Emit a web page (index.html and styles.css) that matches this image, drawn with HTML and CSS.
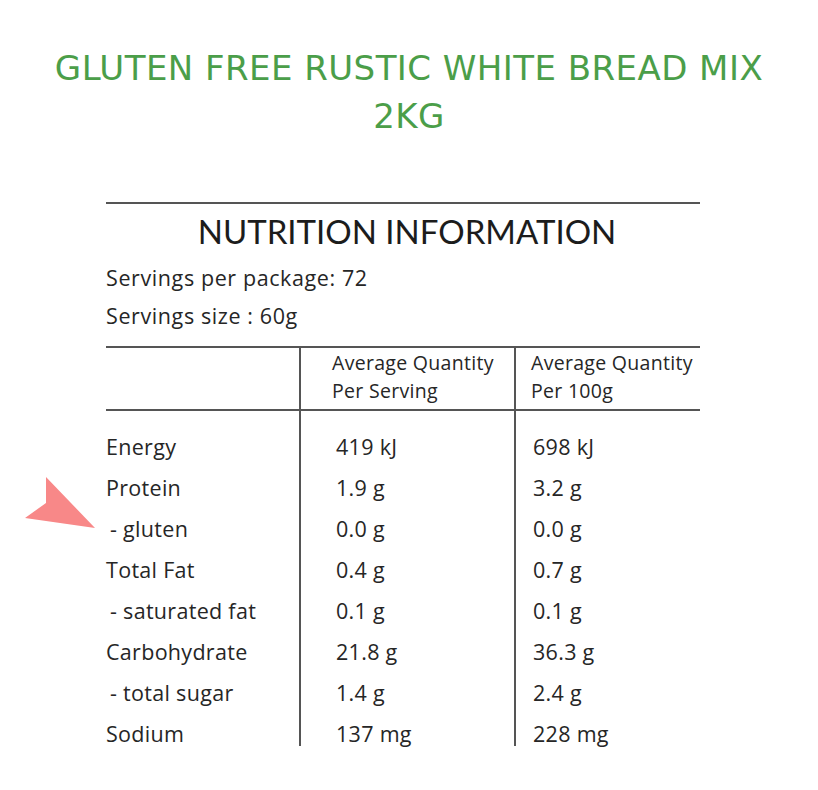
FILE: index.html
```html
<!DOCTYPE html>
<html>
<head>
<meta charset="utf-8">
<link rel="stylesheet" href="styles.css">
</head>
<body>
<div class="page">
  <h1 class="title">GLUTEN FREE RUSTIC WHITE BREAD MIX<br>2KG</h1>
  <div class="panel">
    <h2 class="panel-title">NUTRITION INFORMATION</h2>
    <p class="meta">Servings per package: 72</p>
    <p class="meta">Servings size : 60g</p>
    <div class="table">
      <div class="row head">
        <div class="c1"></div>
        <div class="c2">Average Quantity<br>Per Serving</div>
        <div class="c3">Average Quantity<br>Per 100g</div>
      </div>
      <div class="body">
        <div class="row first"><div class="c1">Energy</div><div class="c2">419 kJ</div><div class="c3">698 kJ</div></div>
        <div class="row"><div class="c1">Protein</div><div class="c2">1.9 g</div><div class="c3">3.2 g</div></div>
        <div class="row"><div class="c1 sub">- gluten</div><div class="c2">0.0 g</div><div class="c3">0.0 g</div></div>
        <div class="row"><div class="c1">Total Fat</div><div class="c2">0.4 g</div><div class="c3">0.7 g</div></div>
        <div class="row"><div class="c1 sub">- saturated fat</div><div class="c2">0.1 g</div><div class="c3">0.1 g</div></div>
        <div class="row"><div class="c1">Carbohydrate</div><div class="c2">21.8 g</div><div class="c3">36.3 g</div></div>
        <div class="row"><div class="c1 sub">- total sugar</div><div class="c2">1.4 g</div><div class="c3">2.4 g</div></div>
        <div class="row last"><div class="c1">Sodium</div><div class="c2">137 mg</div><div class="c3">228 mg</div></div>
      </div>
    </div>
  </div>
  <svg class="pointer" width="80" height="60" viewBox="20 472 80 60"><polygon points="46,477 95,528 25,518 46,503" fill="#f88888"/></svg>
</div>
</body>
</html>
```
FILE: styles.css
```css
html, body { margin: 0; padding: 0; background: #fff; }
.page {
  position: relative;
  width: 818px;
  height: 790px;
  font-family: "Open Sans", Lato, sans-serif;
  color: #262626;
}
.title {
  margin: 0;
  padding-top: 44px;
  text-align: center;
  font-family: "DejaVu Sans", sans-serif;
  font-weight: 400;
  font-size: 34px;
  line-height: 48px;
  color: #4b9e49;
  letter-spacing: 0.45px;
}
.panel {
  margin: 62px 118px 0 106px;
  border-top: 2px solid #555;
}
.panel-title {
  margin: 0;
  padding-left: 8px;
  text-align: center;
  font-family: Lato, sans-serif;
  font-weight: 400;
  font-size: 33px;
  line-height: 54px;
  color: #1c1c1c;
}
.meta {
  margin: 0;
  font-size: 21.5px;
  line-height: 38px;
  letter-spacing: 0.6px;
}
.meta:first-of-type { padding-top: 1px; }
.table {
  margin-top: 11px;
  border-top: 2px solid #555;
}
.row {
  display: grid;
  grid-template-columns: 193px 215px 1fr;
}
.c2 { border-left: 2px solid #555; padding-left: 35px; }
.c3 { border-left: 2px solid #555; padding-left: 17px; }
.head { border-bottom: 2px solid #555; }
.head > div { font-size: 19.5px; line-height: 28px; padding-top: 1px; padding-bottom: 4px; letter-spacing: 0.3px; }
.head .c2 { padding-left: 31px; }
.head .c3 { padding-left: 15px; }
.body .row > div { font-size: 21.5px; line-height: 41px; height: 41px; letter-spacing: 0.3px; }
.body .row.first > div { padding-top: 15px; }
.body .row.last > div { height: 33px; }
.sub { padding-left: 4px; }
.pointer { position: absolute; left: 20px; top: 472px; }
```
